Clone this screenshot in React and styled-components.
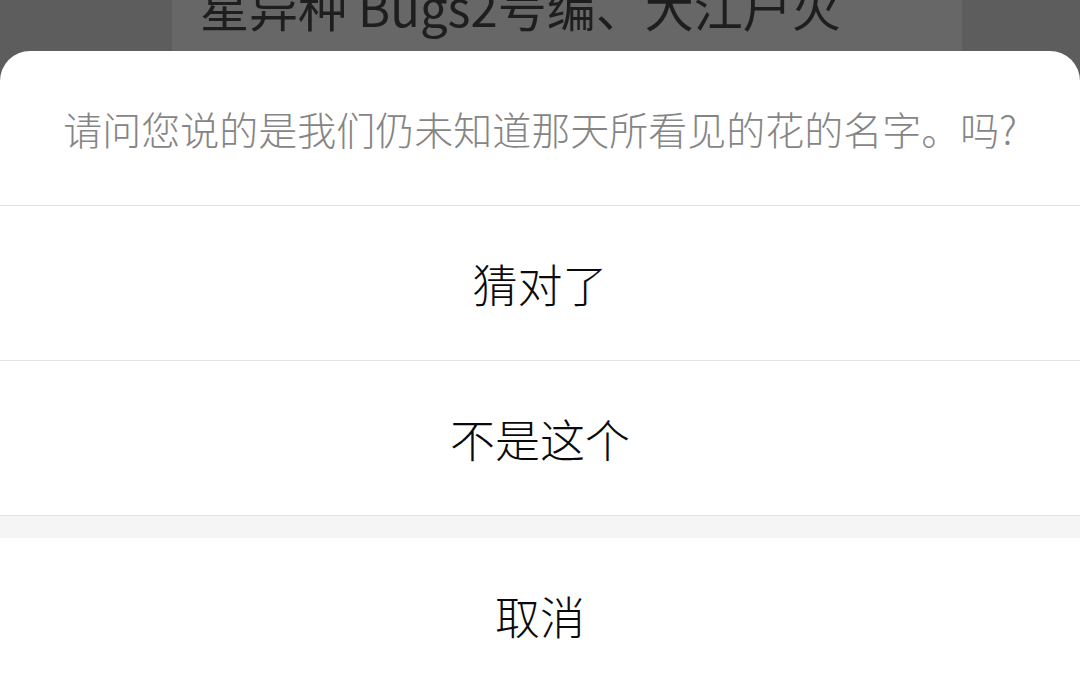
import React from 'react';
import styled, { createGlobalStyle } from 'styled-components';

const GlobalStyle = createGlobalStyle`
  html, body {
    margin: 0;
    padding: 0;
    width: 1080px;
    height: 692px;
    overflow: hidden;
    background: #5d5d5d;
    font-family: "Noto Sans CJK SC", "Noto Sans", sans-serif;
  }
`;

const Screen = styled.div`
  position: relative;
  width: 1080px;
  height: 692px;
  overflow: hidden;
  background: #5d5d5d;
`;

// page content dimmed behind the sheet
const BackCard = styled.div`
  margin: 0 118px 0 172px;
  height: 100%;
  background: #676767;
  overflow: hidden;
`;

const BackTitle = styled.div`
  margin-top: -19px;
  padding-left: 28px;
  font-size: 49px;
  line-height: 1;
  color: #1e1e1e;
  white-space: nowrap;
`;

const Sheet = styled.div`
  position: absolute;
  left: 0;
  right: 0;
  bottom: 0;
  background: #fff;
  border-radius: 30px 30px 0 0;
  display: flex;
  flex-direction: column;
`;

const Title = styled.div`
  height: 154px;
  display: flex;
  align-items: center;
  justify-content: center;
  font-size: 39px;
  font-weight: 300;
  color: #858585;
  border-bottom: 1px solid #e2e2e2;
`;

const Option = styled.div`
  height: 154px;
  display: flex;
  align-items: center;
  justify-content: center;
  font-size: 45px;
  font-weight: 300;
  color: #0a0a0a;
  border-bottom: ${p => (p.$last ? 'none' : '1px solid #e2e2e2')};
`;

const Gap = styled.div`
  height: 22px;
  background: #f5f5f5;
`;

export default function App() {
  return (
    <>
      <GlobalStyle />
      <Screen>
        <BackCard>
          <BackTitle>星异种 Bugs2号编、大江户火</BackTitle>
        </BackCard>
        <Sheet>
          <Title>请问您说的是我们仍未知道那天所看见的花的名字。吗?</Title>
          <Option>猜对了</Option>
          <Option>不是这个</Option>
          <Gap />
          <Option $last>取消</Option>
        </Sheet>
      </Screen>
    </>
  );
}
